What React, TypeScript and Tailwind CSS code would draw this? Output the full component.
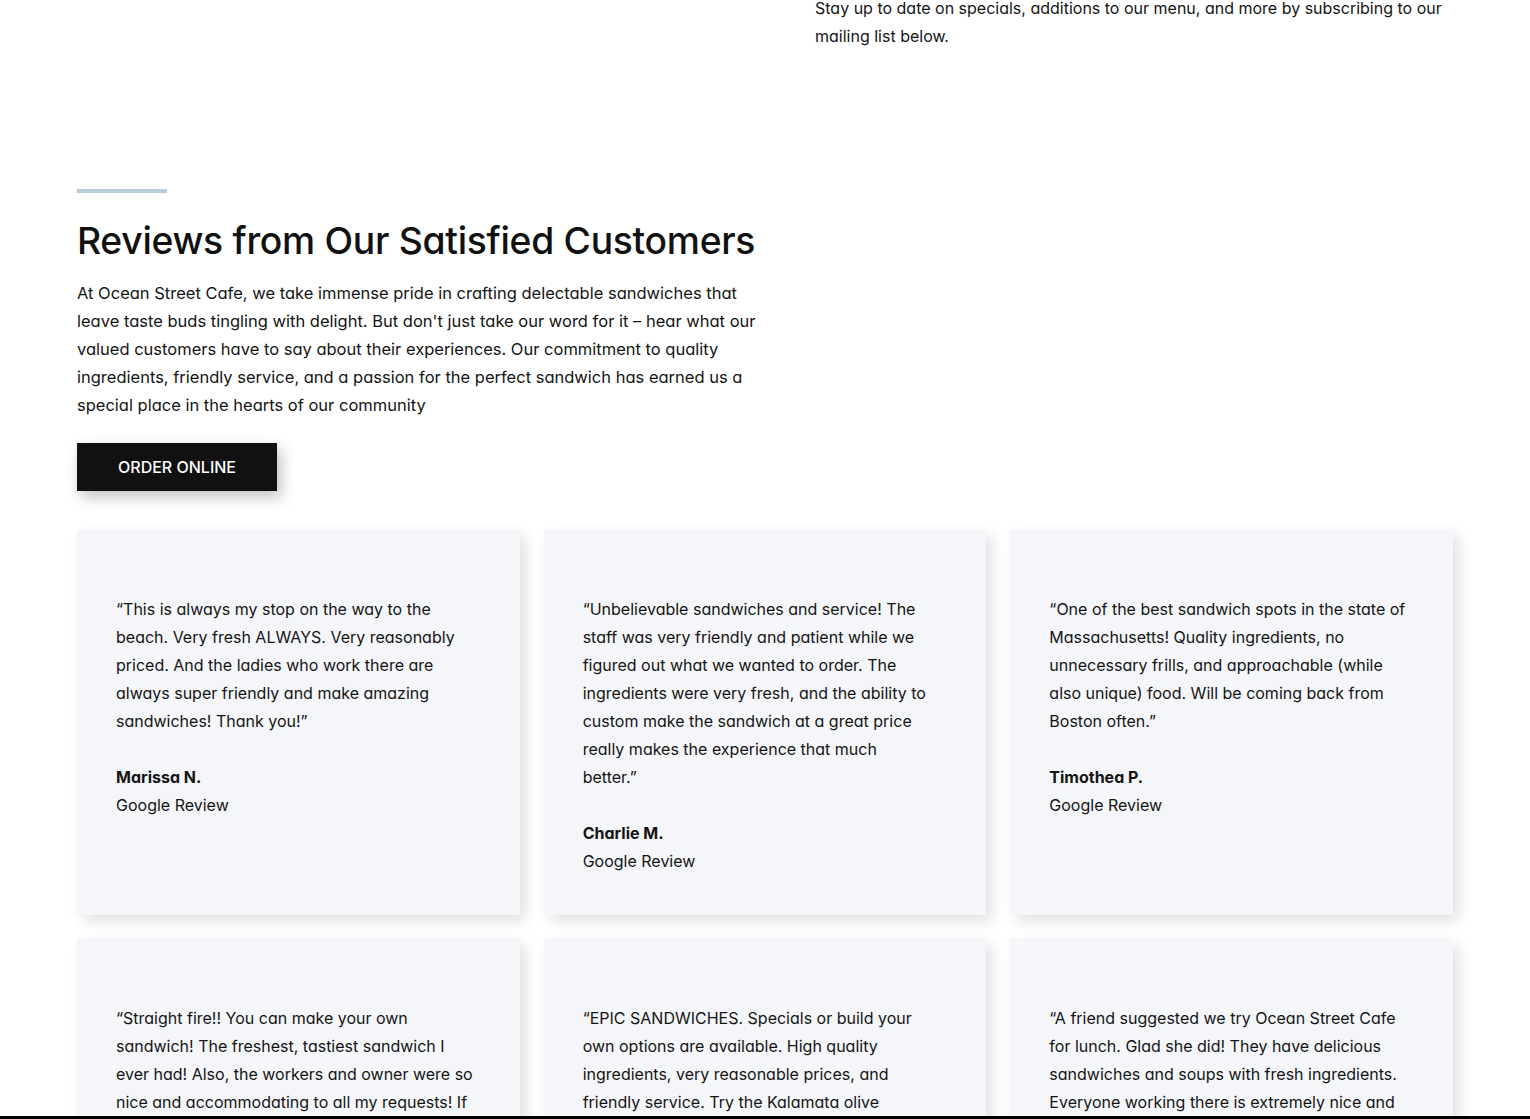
import React from 'react';

type Review = { text: string; name: string; narrow?: boolean };

const reviews: Review[] = [
  {
    text: '“This is always my stop on the way to the beach. Very fresh ALWAYS. Very reasonably priced. And the ladies who work there are always super friendly and make amazing sandwiches! Thank you!”',
    name: 'Marissa N.',
  },
  {
    text: '“Unbelievable sandwiches and service! The staff was very friendly and patient while we figured out what we wanted to order. The ingredients were very fresh, and the ability to custom make the sandwich at a great price really makes the experience that much better.”',
    name: 'Charlie M.',
    narrow: true,
  },
  {
    text: '“One of the best sandwich spots in the state of Massachusetts! Quality ingredients, no unnecessary frills, and approachable (while also unique) food. Will be coming back from Boston often.”',
    name: 'Timothea P.',
  },
  {
    text: '“Straight fire!! You can make your own sandwich! The freshest, tastiest sandwich I ever had! Also, the workers and owner were so nice and accommodating to all my requests! If you are in the area, you have to stop by.”',
    name: 'Jamie R.',
  },
  {
    text: '“EPIC SANDWICHES. Specials or build your own options are available. High quality ingredients, very reasonable prices, and friendly service. Try the Kalamata olive tapenade on your sandwich, you won’t regret it.”',
    name: 'Kevin L.',
  },
  {
    text: '“A friend suggested we try Ocean Street Cafe for lunch. Glad she did! They have delicious sandwiches and soups with fresh ingredients. Everyone working there is extremely nice and helpful. We will definitely be back.”',
    name: 'Dana S.',
  },
];

function ReviewCard({ text, name, narrow }: Review) {
  return (
    <div className="bg-[#f5f6f9] shadow-[6px_6px_14px_rgba(0,0,0,0.12)] px-[39px] pt-[65px] pb-[40px] min-h-[385px]">
      <p className={`text-[16px] leading-[28px] text-[#141414] ${narrow ? 'max-w-[350px]' : ''}`}>{text}</p>
      <p className="mt-[28px] text-[16px] leading-[28px] font-bold text-[#141414]">{name}</p>
      <p className="text-[16px] leading-[28px] text-[#141414]">Google Review</p>
    </div>
  );
}

export default function App() {
  return (
    <div className="bg-white min-h-screen font-['Inter',sans-serif] [font-feature-settings:'cv11'] text-[#141414] overflow-hidden">
      <div className="px-[77px]">
        {/* newsletter text (cut off at top) */}
        <div className="grid grid-cols-[690px_1fr] gap-[48px] -mt-[6px]">
          <div />
          <p className="text-[16px] leading-[28px]">
            Stay up to date on specials, additions to our menu, and more by subscribing to our mailing list below.
          </p>
        </div>

        {/* reviews intro */}
        <div className="mt-[139px] w-[690px]">
          <div className="w-[90px] h-[4px] bg-[#b9cdd9]" />
          <h2 className="mt-[24px] text-[37.3px] leading-[48px] font-medium tracking-[-0.3px] whitespace-nowrap text-[#111]">
            Reviews from Our Satisfied Customers
          </h2>
          <p className="mt-[14px] text-[16.5px] leading-[28px]">
            At Ocean Street Cafe, we take immense pride in crafting delectable sandwiches that leave taste buds tingling with delight. But don't just take our word for it – hear what our valued customers have to say about their experiences. Our commitment to quality ingredients, friendly service, and a passion for the perfect sandwich has earned us a special place in the hearts of our community
          </p>
          <button className="mt-[24px] w-[200px] h-[48px] bg-[#111] text-white text-[16px] font-medium shadow-[4px_6px_14px_rgba(0,0,0,0.25)]">
            ORDER ONLINE
          </button>
        </div>

        {/* review cards */}
        <div className="mt-[39px] grid grid-cols-3 gap-[24px]">
          {reviews.map((r) => (
            <ReviewCard key={r.name} {...r} />
          ))}
        </div>
      </div>
      <div className="fixed bottom-0 left-0 right-0 h-[3px] bg-black" />
    </div>
  );
}
